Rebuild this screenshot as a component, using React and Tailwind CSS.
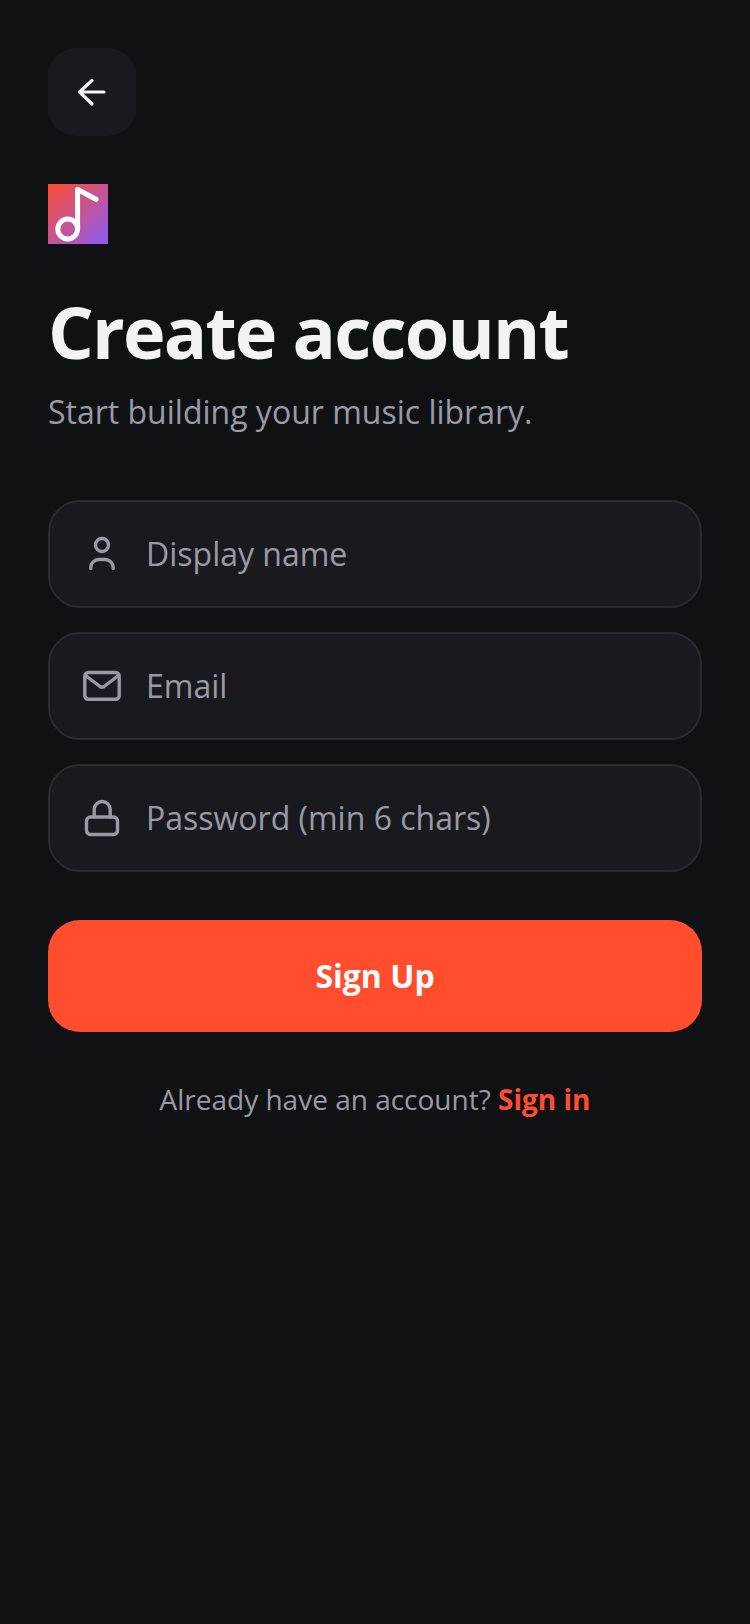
import React from 'react';

const UserIcon = () => (
    <svg viewBox="0 0 40 40" className="h-10 w-10 shrink-0" fill="none" stroke="currentColor" strokeWidth="3.4" strokeLinecap="round" strokeLinejoin="round">
        <circle cx="20" cy="11" r="6.5" />
        <path d="M8.8 34.5v-1a8 8 0 0 1 8-8h6.4a8 8 0 0 1 8 8v1" />
    </svg>
);

const MailIcon = () => (
    <svg viewBox="0 0 40 40" className="h-10 w-10 shrink-0" fill="none" stroke="currentColor" strokeWidth="3.4" strokeLinecap="round" strokeLinejoin="round">
        <rect x="2.8" y="6.5" width="34.4" height="26.7" rx="3.5" />
        <path d="M3.5 9.5 18 20.5q2 1.4 4 0L36.5 9.5" />
    </svg>
);

const LockIcon = () => (
    <svg viewBox="0 0 40 40" className="h-10 w-10 shrink-0" fill="none" stroke="currentColor" strokeWidth="3.4" strokeLinecap="round" strokeLinejoin="round">
        <rect x="4.5" y="19" width="31" height="17.5" rx="4" />
        <path d="M12.2 19v-7.5a8 8 0 0 1 16 0V19" />
    </svg>
);

const fields = [
    { icon: UserIcon, placeholder: 'Display name', type: 'text' },
    { icon: MailIcon, placeholder: 'Email', type: 'email' },
    { icon: LockIcon, placeholder: 'Password (min 6 chars)', type: 'password' },
];

const App = () => {
    return (
        <div className="min-h-[1624px] bg-[#101115] px-12 pt-12 font-['Open_Sans',sans-serif] text-[#f2f2f7]">
            <button className="flex h-[88px] w-[88px] items-center justify-center rounded-[28px] bg-[#191a1f]">
                <svg viewBox="0 0 32 32" className="h-8 w-8" fill="none" stroke="currentColor" strokeWidth="3.2" strokeLinecap="round" strokeLinejoin="round">
                    <path d="M28 16H3.5M16 4.5 3.5 16 16 28" />
                </svg>
            </button>

            <div className="mt-12 h-[60px] w-[60px] bg-[linear-gradient(135deg,#ff4d2d,#8b5cf6)]">
                <svg viewBox="0 0 60 60" className="h-[60px] w-[60px]" fill="none" stroke="white" strokeWidth="5" strokeLinecap="round" strokeLinejoin="round">
                    <circle cx="19.7" cy="45" r="9.9" />
                    <path d="M29.6 45V5.5L48 15.3" />
                </svg>
            </div>

            <h1 className="mt-[41px] text-[72px] leading-[92px] font-bold tracking-[-1.8px]">Create account</h1>
            <p className="mt-[13px] text-[32px] leading-[44px] text-[#9a9aa5]">Start building your music library.</p>

            <div className="mt-[66px] flex flex-col gap-6">
                {fields.map(({ icon: Icon, placeholder, type }) => (
                    <label key={placeholder} className="flex h-[108px] items-center gap-6 rounded-[32px] border-2 border-[#2a2b31] bg-[#191a1f] pl-8 pr-8 text-[#9a9aa5]">
                        <Icon />
                        <input
                            type={type}
                            placeholder={placeholder}
                            className="w-full bg-transparent text-[32px] text-[#f2f2f7] outline-none placeholder:text-[#9a9aa5]"
                        />
                    </label>
                ))}
            </div>

            <button className="mt-12 h-28 w-full rounded-[32px] bg-[#ff4d2d] text-[32px] font-bold text-white">Sign Up</button>

            <p className="mt-12 text-center text-[28px] leading-[38px] text-[#9a9aa5]">
                Already have an account? <span className="font-bold text-[#ff4d2d]">Sign in</span>
            </p>
        </div>
    );
};

export default App;
